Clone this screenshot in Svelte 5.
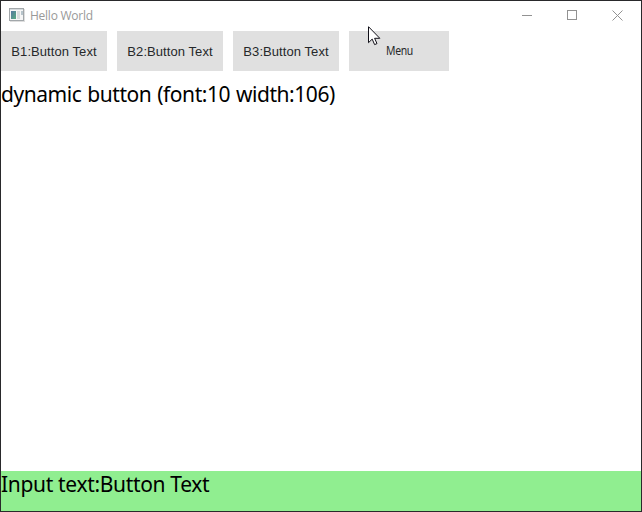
<script>
  const buttons = ['B1:Button Text', 'B2:Button Text', 'B3:Button Text'];
</script>

<div class="window">
  <header>
    <svg class="app-icon" width="16" height="14" viewBox="0 0 16 14" shape-rendering="crispEdges">
      <defs>
        <linearGradient id="pane" x1="0" y1="0" x2="1" y2="1">
          <stop offset="0" stop-color="#5577a0" />
          <stop offset="1" stop-color="#58ad80" />
        </linearGradient>
      </defs>
      <rect x=".5" y=".5" width="14" height="12" fill="#f6f6f6" stroke="#a2a7aa" />
      <path d="M1 1.5h13" stroke="#d5dadd" />
      <rect x="2" y="3" width="5" height="8" fill="url(#pane)" />
      <rect x="8" y="3" width="3" height="8" fill="#d9dddd" />
      <rect x="12" y="3" width="2" height="4" fill="#b7c4cb" />
      <path d="M15.5 1v12.5H1" fill="none" stroke="#dedede" />
    </svg>
    <span class="title">Hello World</span>
    <div class="controls">
      <svg width="10" height="10" viewBox="0 0 10 10"><path d="M0 5.5h10" /></svg>
      <svg width="10" height="10" viewBox="0 0 10 10"><rect x=".5" y=".5" width="9" height="9" /></svg>
      <svg width="11" height="11" viewBox="0 0 11 11"><path d="M.5.5l10 10M10.5.5l-10 10" /></svg>
    </div>
  </header>

  <div class="toolbar">
    {#each buttons as label}
      <button><span>{label}</span></button>
    {/each}
    <button class="menu"><span>Menu</span></button>
  </div>

  <main><span class="info">dynamic button (font:10 width:106)</span></main>
  <footer><span class="input">Input text:Button Text</span></footer>

  <svg class="cursor" width="13" height="20" viewBox="0 0 13 20">
    <path d="M.5.7v16l3.7-3.6 2.4 5.5 2.4-1-2.4-5.3h5.2z" fill="#fff" stroke="#111018" />
  </svg>
</div>

<style>
  .window {
    position: relative;
    box-sizing: border-box;
    width: 642px;
    height: 512px;
    border: 1px solid #29292b;
    background: #fff;
    display: flex;
    flex-direction: column;
    overflow: hidden;
    color: #000;
    font-family: "Noto Sans", sans-serif;
  }
  header {
    height: 30px;
    flex: none;
    display: flex;
    align-items: center;
    padding: 0 18px 2px 8px;
    box-sizing: border-box;
  }
  .app-icon { display: block; }
  .title {
    font: 12px/16px "Open Sans", sans-serif;
    color: #999;
    margin: 2px 0 0 5px;
    letter-spacing: -0.25px;
    white-space: nowrap;
  }
  .controls {
    margin-left: auto;
    display: flex;
    align-items: center;
    gap: 35px;
  }
  .controls svg {
    display: block;
    fill: none;
    stroke: #929292;
  }
  .toolbar {
    display: flex;
    gap: 10px;
    height: 40px;
    flex: none;
  }
  button {
    width: 106px;
    height: 40px;
    padding: 1px 0 0;
    border: 0;
    background: #e0e0e0;
    color: #26282a;
    font: 13px/16px "Liberation Sans", sans-serif;
    letter-spacing: 0.07px;
    white-space: nowrap;
  }
  .menu {
    width: 100px;
    padding: 0;
    font: 12px/16px "Noto Sans", sans-serif;
    letter-spacing: -0.4px;
  }
  .menu span {
    display: inline-block;
    transform: scaleX(0.87);
  }
  main {
    flex: 1;
    padding-top: 9px;
  }
  .info, .input {
    display: inline-block;
    font-size: 21px;
    line-height: 28px;
    white-space: pre;
  }
  .info { letter-spacing: -0.45px; word-spacing: 0.9px; }
  .input { letter-spacing: -0.33px; margin-top: -1px; }
  footer {
    height: 40px;
    flex: none;
    background: #90ee90;
  }
  .cursor {
    position: absolute;
    left: 367px;
    top: 25px;
  }
</style>
